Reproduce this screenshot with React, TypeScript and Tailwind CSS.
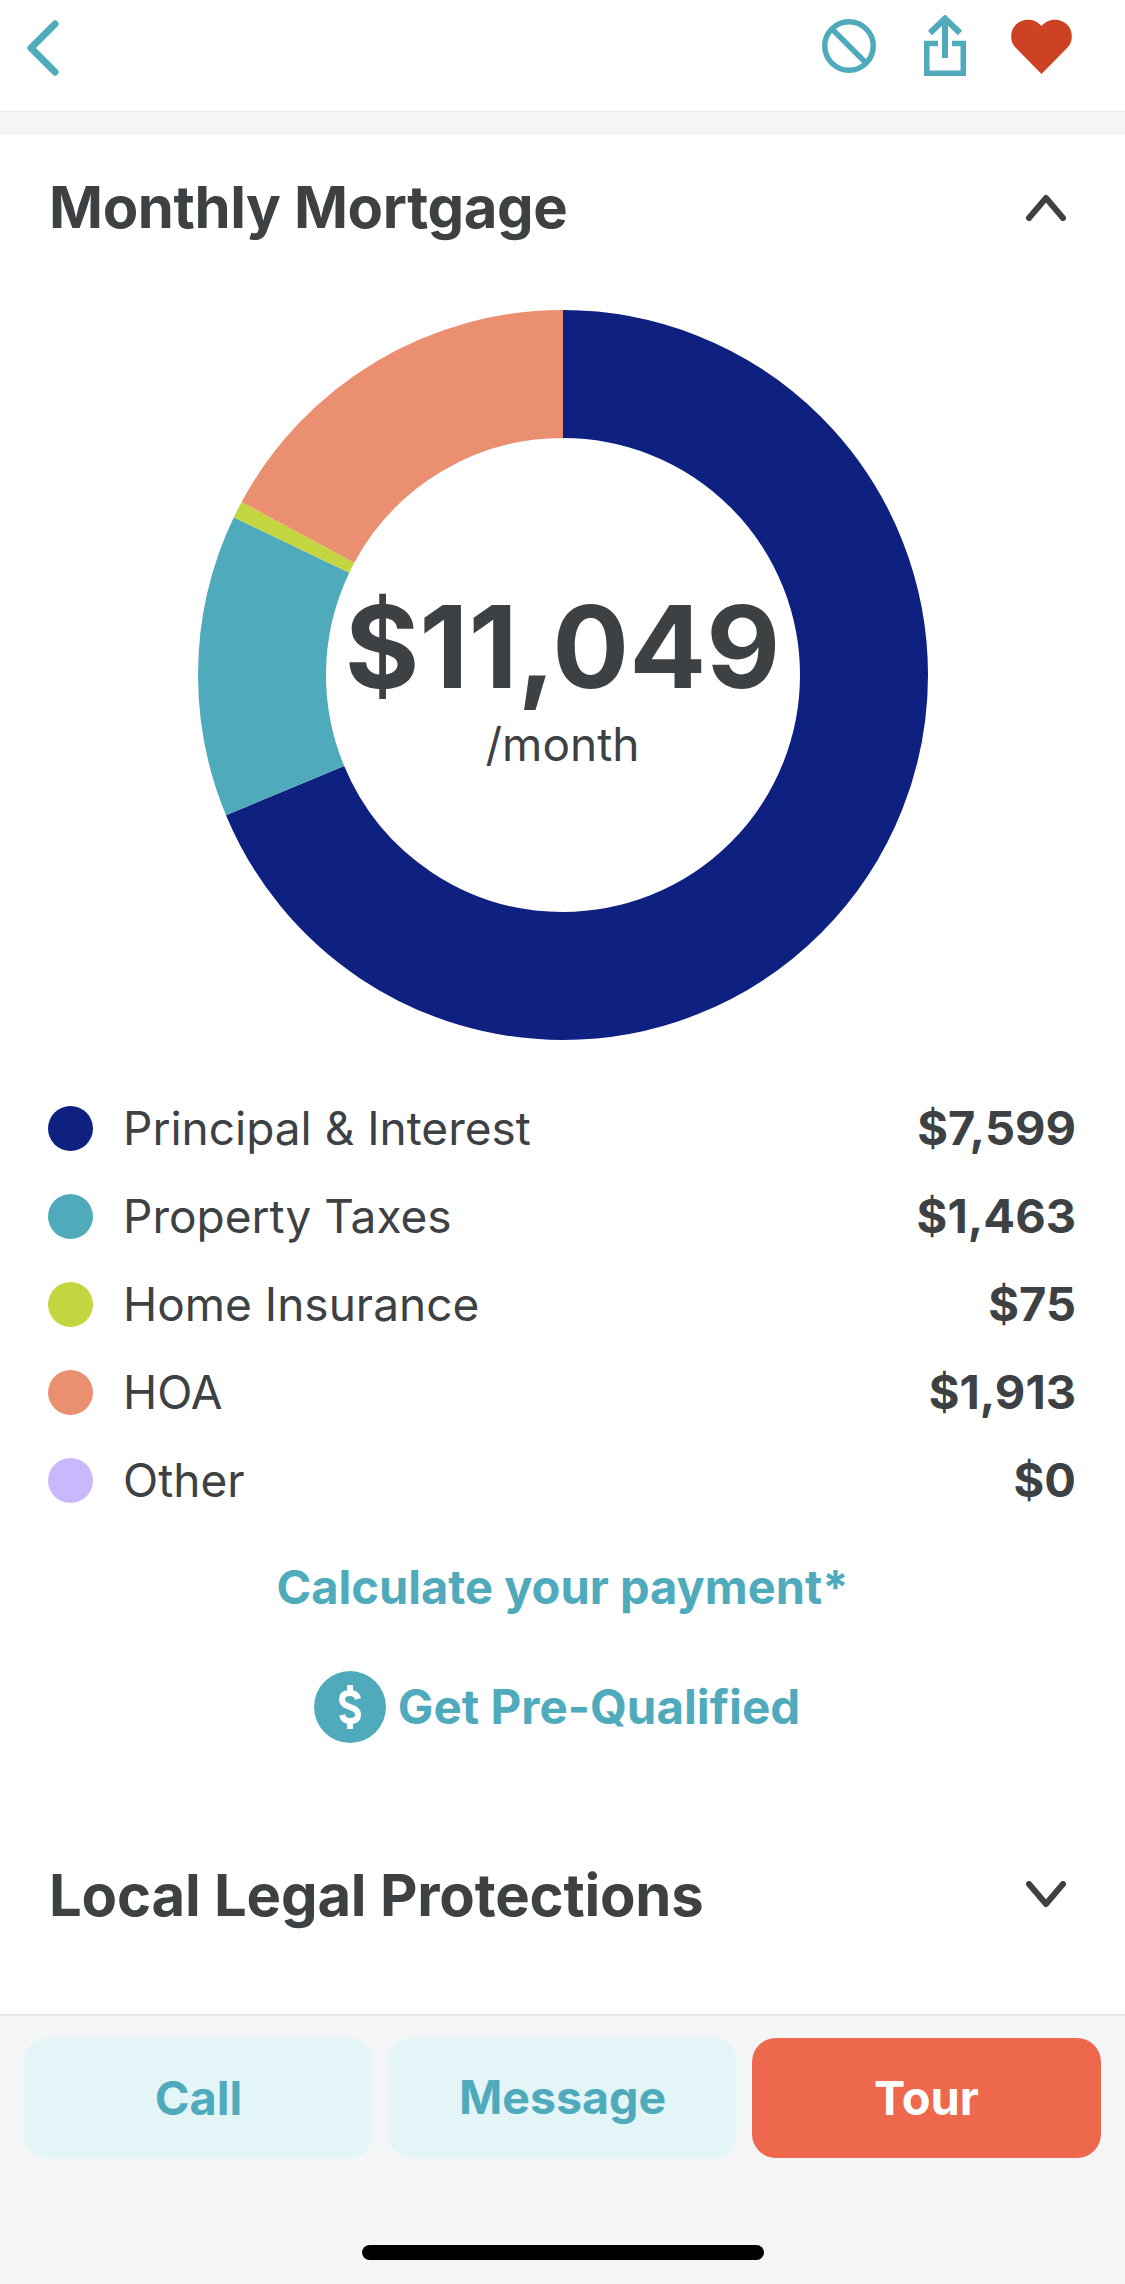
import React from "react";

// sweep of each slice in degrees, clockwise from the top
const slices = [
  { color: "#0e2080", sweep: 247.4 },
  { color: "#4fabbc", sweep: 48.2 },
  { color: "#c4d63f", sweep: 2.7 },
  { color: "#ea9070", sweep: 61.7 },
];

const rows = [
  { label: "Principal & Interest", amount: "$7,599", dot: "bg-[#0e2080]" },
  { label: "Property Taxes", amount: "$1,463", dot: "bg-[#4fabbc]" },
  { label: "Home Insurance", amount: "$75", dot: "bg-[#c4d63f]" },
  { label: "HOA", amount: "$1,913", dot: "bg-[#ea9070]" },
  { label: "Other", amount: "$0", dot: "bg-[#c9b8fb]" },
];

const Chevron: React.FC<{ up?: boolean }> = ({ up }) => (
  <svg width="42" height="28" viewBox="0 0 42 28" fill="none" stroke="#3e4143" strokeWidth="6" strokeLinecap="round" strokeLinejoin="round">
    <path d={up ? "M4 25L21 5L38 25" : "M4 3L21 23L38 3"} />
  </svg>
);

const Donut: React.FC = () => {
  let used = 0;
  return (
    <div className="relative w-[730px] h-[730px] mt-[31px] mx-auto">
      <svg width="730" height="730" viewBox="0 0 730 730">
        {slices.map((s) => {
          const offset = -used;
          used += s.sweep;
          return (
            <circle
              key={s.color}
              cx="365"
              cy="365"
              r="301"
              fill="none"
              stroke={s.color}
              strokeWidth="128"
              pathLength={360}
              strokeDasharray={`${s.sweep} ${360 - s.sweep}`}
              strokeDashoffset={offset}
              transform="rotate(-90 365 365)"
            />
          );
        })}
      </svg>
      <div className="absolute inset-0 flex flex-col items-center justify-center">
        <div className="text-[114px] leading-[120px] font-bold text-[#3e4143] mt-[9px]">$11,049</div>
        <div className="text-[46px] leading-[56px] text-[#3e4143] mt-[9px]">/month</div>
      </div>
    </div>
  );
};

export default function App() {
  return (
    <div className="flex flex-col w-[1125px] h-[2284px] bg-white font-['Inter',sans-serif]">
      <header className="flex items-center h-[112px] shrink-0 pl-[27px] pr-[53px] border-b border-[#e8e9eb]">
        <svg className="mb-[16px]" width="34" height="56" viewBox="0 0 34 56" fill="none" stroke="#4fabbc" strokeWidth="7" strokeLinecap="round" strokeLinejoin="round">
          <path d="M28 4L4 28L28 52" />
        </svg>
        <div className="flex items-start ml-auto gap-[45px] mb-[20px]">
          <svg className="mt-[4px] mr-[3px]" width="54" height="54" viewBox="0 0 54 54" fill="none" stroke="#4fabbc" strokeWidth="5.5">
            <circle cx="27" cy="27" r="24.25" />
            <path d="M10 10L44 44" />
          </svg>
          <svg width="42" height="61" viewBox="0 0 42 61" fill="none" stroke="#4fabbc" strokeWidth="5.5">
            <path d="M14 28.5H2.750V58.25H39.25V28.5H28" />
            <path d="M21 43V3" strokeWidth="6" />
            <path d="M6 18L21 3.500L36 18" strokeWidth="6" />
          </svg>
          <svg className="mt-[4px]" width="61" height="55" viewBox="0 0 61 55" fill="#cc4222">
            <path d="M30.500 55L4 28C-1.500 22 -1 11 5 5.500C11.500 -0.500 23 -1.500 30.500 7C38 -1.500 49.500 -0.500 56 5.500C62 11 62.500 22 57 28Z" />
          </svg>
        </div>
      </header>
      <div className="h-[23px] shrink-0 bg-[#f3f5f7]" />

      <main className="flex flex-col flex-1">
        <div className="flex items-center justify-between h-[144px] pl-[49px] pr-[58px]">
          <h2 className="text-[58px] font-bold tracking-[-0.4px] text-[#3e4143]">Monthly Mortgage</h2>
          <Chevron up />
        </div>

        <Donut />

        <div className="flex flex-col mt-[44px] pl-[48px] pr-[49px]">
          {rows.map((r) => (
            <div key={r.label} className="flex items-center h-[88px] text-[#3e4143] text-[46px]">
              <span className={`w-[45px] h-[45px] rounded-full ${r.dot}`} />
              <span className="ml-[30px]">{r.label}</span>
              <span className="ml-auto text-[47px] font-bold">{r.amount}</span>
            </div>
          ))}
        </div>

        <div className="flex items-center justify-center h-[64px] mt-[31px] text-[47px] font-bold text-[#4fabbc]">
          Calculate your payment*
        </div>

        <div className="flex items-center justify-center gap-[12px] h-[72px] mt-[52px] pr-[11px]">
          <span className="flex items-center justify-center w-[72px] h-[72px] rounded-full bg-[#4fabbc]">
            <svg width="26" height="46" viewBox="0 0 26 46" fill="none" stroke="#ffffff" strokeWidth="6">
              <path d="M13 1V8M13 38V45" />
              <path d="M21 15C20 10.500 17 9 13 9C8 9 5 11 5 15C5 20 9 21.500 13 23C17 24.500 21 26 21 31C21 35 18 37 13 37C9 37 6 35.500 5 31" />
            </svg>
          </span>
          <span className="text-[47.500px] font-bold text-[#4fabbc]">Get Pre-Qualified</span>
        </div>

        <div className="flex items-center justify-between h-[146px] mt-[79px] pl-[49px] pr-[58px]">
          <h2 className="text-[58px] font-bold tracking-[-0.200px] text-[#3e4143]">Local Legal Protections</h2>
          <Chevron />
        </div>
      </main>

      <footer className="flex flex-col h-[270px] shrink-0 bg-[#f3f5f7] border-t-2 border-[#e6e7e9]">
        <div className="grid grid-cols-3 gap-[15px] h-[120px] mt-[22px] px-[24px]">
          <button className="rounded-[24px] bg-[#e3f5f6] text-[47px] font-bold text-[#4fabbc]">Call</button>
          <button className="rounded-[24px] bg-[#e3f5f6] text-[46.500px] font-bold text-[#4fabbc]">Message</button>
          <button className="rounded-[24px] bg-[#ed684d] text-[47px] font-bold text-white">Tour</button>
        </div>
        <div className="w-[402px] h-[15px] mt-[87px] mx-auto rounded-full bg-black" />
      </footer>
    </div>
  );
}
